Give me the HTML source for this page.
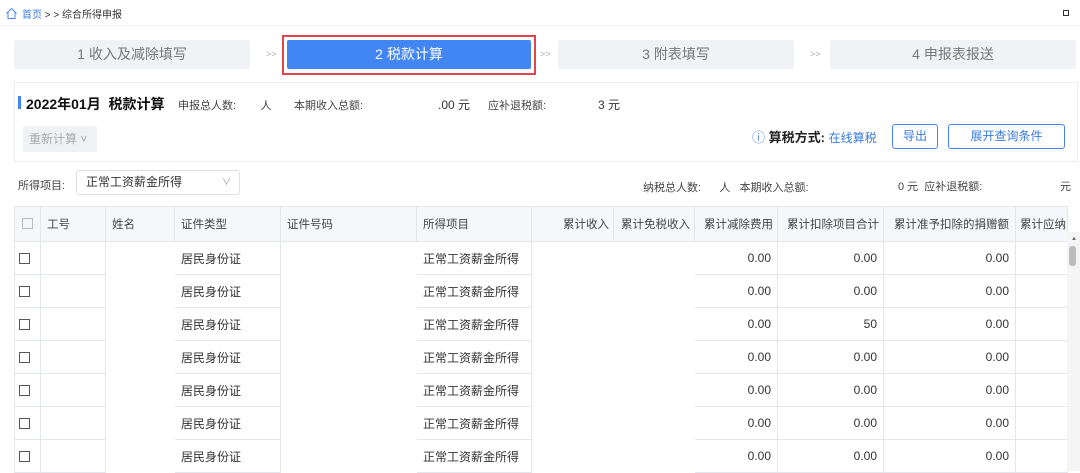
<!DOCTYPE html><html><head><meta charset="utf-8"><style>
*{margin:0;padding:0;box-sizing:border-box}
body{width:1080px;height:471px;overflow:hidden;background:#fff;font-family:"Liberation Sans","Noto Sans CJK SC",sans-serif;font-size:12px;color:#333;position:relative}
.a{position:absolute}
.step{position:absolute;top:40px;height:29px;background:#f0f2f5;color:#777;font-size:14px;text-align:center;line-height:29px;border-radius:2px}
.arr{position:absolute;top:40px;line-height:29px;color:#aaa;font-size:9px}
table{position:absolute;left:14px;top:206px;border-collapse:collapse;table-layout:fixed;width:1053px}
td,th{border:1px solid #e3e6eb;height:33px;font-weight:normal;font-size:12px;padding:0 6px;white-space:nowrap;overflow:hidden;text-align:left}
th{background:#f5f7fa;height:35px;font-size:11.5px;color:#444}
.r{text-align:right}
.cb{display:inline-block;width:11px;height:11px;border:1.5px solid #556;vertical-align:middle}
th .cb{border:1px solid #bbb}
.btn{position:absolute;border:1px solid #4a86e8;color:#3a7be0;border-radius:3px;text-align:center;font-size:12px;background:#fff}
</style></head><body>
<svg class="a" style="left:5px;top:7px" width="13" height="13" viewBox="0 0 13 13"><path d="M1.5 6.5 L6.5 1.5 L11.5 6.5 M3 5.5 V11.5 H10 V5.5" fill="none" stroke="#4a86e8" stroke-width="1"/></svg>
<div class="a" style="left:22px;top:6px;font-size:10px"><span style="color:#3a7be0">首页</span> &gt; &gt; 综合所得申报</div>
<div class="a" style="left:1063px;top:10px;width:6px;height:6px;border:1px solid #333"></div>
<div class="a" style="left:0;top:25px;width:1080px;height:1px;background:#f0f0f0"></div>
<div class="step" style="left:14px;width:236px">1 收入及减除填写</div>
<div class="arr" style="left:266px">&gt;&gt;</div>
<div class="a" style="left:282px;top:35px;width:254px;height:40px;border:2px solid #e0464e"></div>
<div class="step" style="left:287px;top:40px;width:244px;background:#4285f4;color:#fff">2 税款计算</div>
<div class="arr" style="left:540px">&gt;&gt;</div>
<div class="step" style="left:558px;width:236px">3 附表填写</div>
<div class="arr" style="left:810px">&gt;&gt;</div>
<div class="step" style="left:830px;width:246px">4 申报表报送</div>
<div class="a" style="left:14px;top:82px;width:1064px;height:80px;border:1px solid #eceef1"></div>
<div class="a" style="left:18px;top:96px;width:3px;height:13px;background:#4285f4"></div>
<div class="a" style="left:26px;top:94px;font-size:14px;font-weight:bold;color:#111">2022年01月&nbsp; 税款计算</div>
<div class="a" style="left:178px;top:97px;color:#444;font-size:11px">申报总人数:&nbsp;&nbsp;&nbsp;&nbsp;&nbsp;&nbsp; &nbsp;人</div>
<div class="a" style="left:294px;top:97px;color:#444;font-size:11px">本期收入总额:</div>
<div class="a" style="left:438px;top:96px;color:#333">.00 元</div>
<div class="a" style="left:488px;top:97px;color:#444;font-size:11px">应补退税额:</div>
<div class="a" style="left:598px;top:96px;color:#333">3 元</div>
<div class="a" style="left:23px;top:126px;width:74px;height:26px;background:#f0f1f3;border-radius:2px;color:#aaa;line-height:26px;padding-left:6px;font-size:12px">重新计算 ˅</div>
<div class="a" style="left:752px;top:127px;font-size:13px;color:#222"><span style="color:#4a86e8">ⓘ</span> <b>算税方式:</b> <span style="color:#3a7be0;font-size:12px">在线算税</span></div>
<div class="btn" style="left:892px;top:124px;width:46px;height:25px;line-height:23px">导出</div>
<div class="btn" style="left:948px;top:124px;width:117px;height:25px;line-height:23px">展开查询条件</div>
<div class="a" style="left:18px;top:177px;font-size:11px;color:#444">所得项目:</div>
<div class="a" style="left:76px;top:170px;width:164px;height:25px;border:1px solid #dcdfe6;border-radius:3px;line-height:23px;padding-left:9px;font-size:12px">正常工资薪金所得<span style="position:absolute;right:8px;color:#999;font-size:9px">&#8744;</span></div>
<div class="a" style="left:643px;top:179px;font-size:11px;color:#444">纳税总人数:&nbsp;&nbsp;&nbsp;&nbsp;&nbsp;&nbsp;人&nbsp;&nbsp; 本期收入总额:</div>
<div class="a" style="left:898px;top:178px;font-size:11px;color:#444">0 元&nbsp; 应补退税额:</div>
<div class="a" style="left:1060px;top:178px;font-size:11px;color:#444">元</div>
<table>
<colgroup><col style="width:26px"><col style="width:65px"><col style="width:69px"><col style="width:106px"><col style="width:136px"><col style="width:115px"><col style="width:82px"><col style="width:81px"><col style="width:83px"><col style="width:106px"><col style="width:132px"><col style="width:52px"></colgroup>
<tr><th style="padding:0 7px"><span class="cb"></span></th><th>工号</th><th>姓名</th><th>证件类型</th><th>证件号码</th><th>所得项目</th><th class="r" style="padding:0 4px">累计收入</th><th class="r" style="padding:0 4px">累计免税收入</th><th class="r" style="padding:0 4px">累计减除费用</th><th class="r" style="padding:0 4px">累计扣除项目合计</th><th class="r">累计准予扣除的捐赠额</th><th style="padding:0 4px">累计应纳</th></tr>
<tr><td style="padding:0 4px"><span class="cb"></span></td><td></td><td style="border-color:#fff"></td><td>居民身份证</td><td style="border-color:#fff"></td><td>正常工资薪金所得</td><td style="border-color:#fff"></td><td style="border-color:#fff"></td><td class="r">0.00</td><td class="r">0.00</td><td class="r">0.00</td><td></td></tr>
<tr><td style="padding:0 4px"><span class="cb"></span></td><td></td><td style="border-color:#fff"></td><td>居民身份证</td><td style="border-color:#fff"></td><td>正常工资薪金所得</td><td style="border-color:#fff"></td><td style="border-color:#fff"></td><td class="r">0.00</td><td class="r">0.00</td><td class="r">0.00</td><td></td></tr>
<tr><td style="padding:0 4px"><span class="cb"></span></td><td></td><td style="border-color:#fff"></td><td>居民身份证</td><td style="border-color:#fff"></td><td>正常工资薪金所得</td><td style="border-color:#fff"></td><td style="border-color:#fff"></td><td class="r">0.00</td><td class="r">50</td><td class="r">0.00</td><td></td></tr>
<tr><td style="padding:0 4px"><span class="cb"></span></td><td></td><td style="border-color:#fff"></td><td>居民身份证</td><td style="border-color:#fff"></td><td>正常工资薪金所得</td><td style="border-color:#fff"></td><td style="border-color:#fff"></td><td class="r">0.00</td><td class="r">0.00</td><td class="r">0.00</td><td></td></tr>
<tr><td style="padding:0 4px"><span class="cb"></span></td><td></td><td style="border-color:#fff"></td><td>居民身份证</td><td style="border-color:#fff"></td><td>正常工资薪金所得</td><td style="border-color:#fff"></td><td style="border-color:#fff"></td><td class="r">0.00</td><td class="r">0.00</td><td class="r">0.00</td><td></td></tr>
<tr><td style="padding:0 4px"><span class="cb"></span></td><td></td><td style="border-color:#fff"></td><td>居民身份证</td><td style="border-color:#fff"></td><td>正常工资薪金所得</td><td style="border-color:#fff"></td><td style="border-color:#fff"></td><td class="r">0.00</td><td class="r">0.00</td><td class="r">0.00</td><td></td></tr>
<tr><td style="padding:0 4px"><span class="cb"></span></td><td></td><td style="border-color:#fff"></td><td>居民身份证</td><td style="border-color:#fff"></td><td>正常工资薪金所得</td><td style="border-color:#fff"></td><td style="border-color:#fff"></td><td class="r">0.00</td><td class="r">0.00</td><td class="r">0.00</td><td></td></tr>
</table>
<div class="a" style="left:1067px;top:232px;width:13px;height:239px;background:#f5f5f5"></div>
<div class="a" style="left:1071px;top:236px;font-size:6px;color:#666">▲</div>
<div class="a" style="left:1069px;top:246px;width:7px;height:20px;background:#bbb;border-radius:3px"></div>
</body></html>
